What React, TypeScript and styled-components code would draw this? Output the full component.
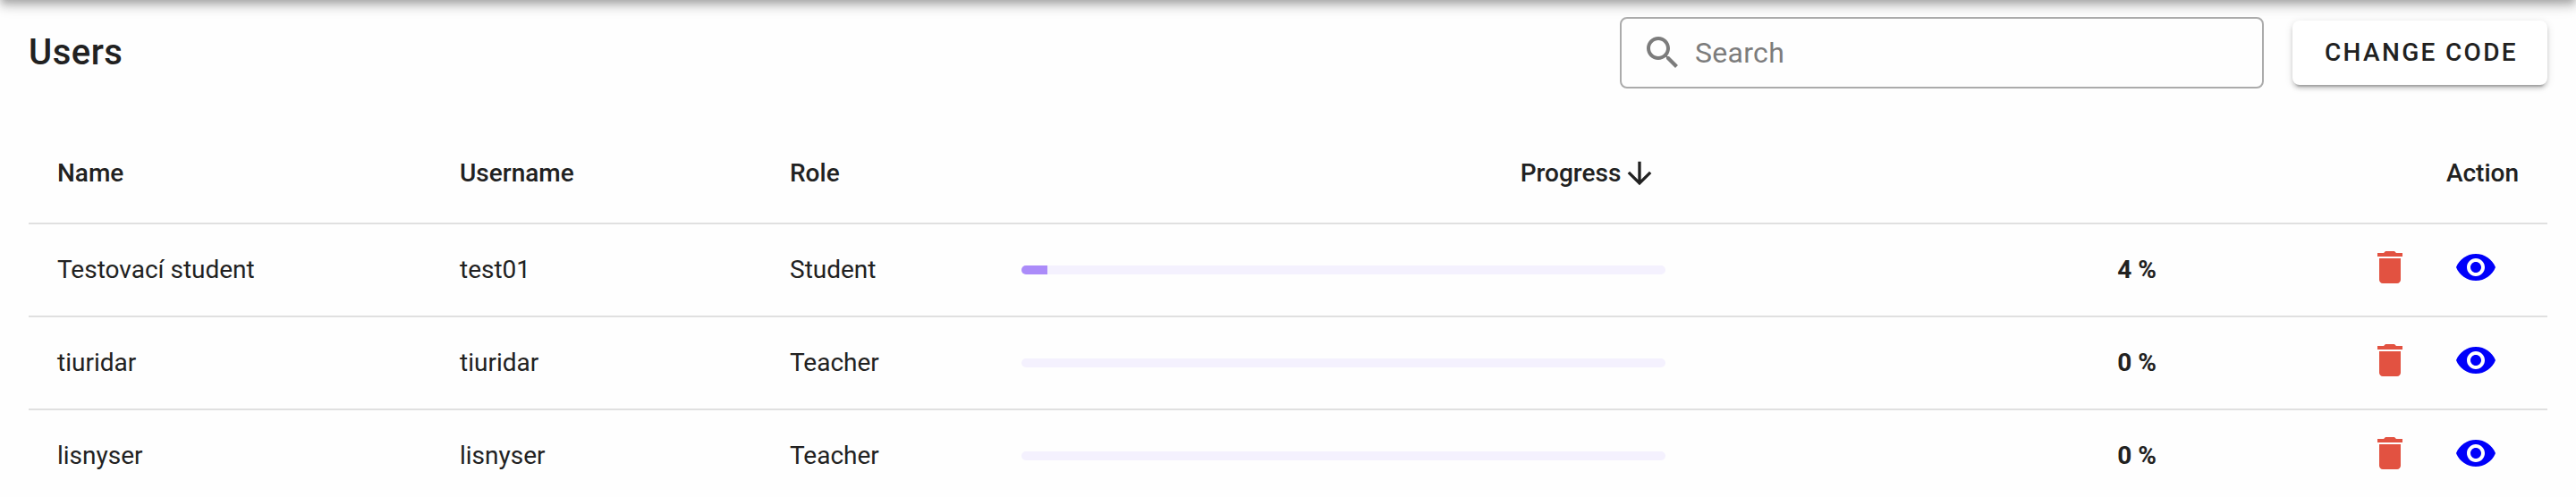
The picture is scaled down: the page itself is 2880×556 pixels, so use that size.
import React from "react";
import styled, { createGlobalStyle } from "styled-components";

const GlobalStyle = createGlobalStyle`
  *, *::before, *::after { box-sizing: border-box; }
  html, body { margin: 0; padding: 0; }
  body {
    background: #fefefe;
    color: #212121;
    font-family: Roboto, "Liberation Sans", sans-serif;
    font-size: 28px;
    -webkit-font-smoothing: antialiased;
  }
`;

const Page = styled.div`
  height: 556px;
  overflow: hidden;
  display: flex;
  flex-direction: column;
`;

const AppBar = styled.header`
  flex: none;
  height: 128px;
  margin-top: -128px;
  box-shadow:
    0 4px 8px -2px rgba(0, 0, 0, 0.2),
    0 8px 10px 0 rgba(0, 0, 0, 0.14),
    0 2px 20px 0 rgba(0, 0, 0, 0.12);
`;

const Toolbar = styled.div`
  flex: none;
  display: flex;
  align-items: center;
  gap: 32px;
  height: 118px;
  padding: 0 32px;
`;

const Title = styled.h1`
  flex: 1;
  margin: 0;
  font-size: 40px;
  line-height: 64px;
  font-weight: 500;
  letter-spacing: 0.5px;
`;

const SearchField = styled.label`
  display: flex;
  align-items: center;
  gap: 12px;
  width: 720px;
  height: 80px;
  padding: 0 22px;
  border: 2px solid #ababab;
  border-radius: 8px;
  color: #7c7c7c;
`;

const SearchInput = styled.input`
  flex: 1;
  min-width: 0;
  padding: 0;
  border: 0;
  outline: 0;
  background: transparent;
  font: 400 32px/56px Roboto, "Liberation Sans", sans-serif;
  letter-spacing: 0.3px;
  color: #212121;
  &::placeholder { color: #7c7c7c; opacity: 1; }
`;

const RaisedButton = styled.button`
  width: 285px;
  height: 72px;
  padding: 0 0 0 3px;
  border: 0;
  border-radius: 8px;
  background: #fff;
  color: #212121;
  font: 500 28px/72px Roboto, "Liberation Sans", sans-serif;
  letter-spacing: 2.33px;
  text-transform: uppercase;
  white-space: nowrap;
  box-shadow:
    0 6px 2px -4px rgba(0, 0, 0, 0.2),
    0 4px 4px 0 rgba(0, 0, 0, 0.14),
    0 2px 10px 0 rgba(0, 0, 0, 0.12);
`;

const Table = styled.div`
  flex: none;
  margin: 21px 32px 0;
`;

const Row = styled.div<{ $head?: boolean }>`
  display: grid;
  grid-template-columns: 450px 369px 259px 1333px 1fr;
  height: ${(p) => (p.$head ? 112 : 104)}px;
  border-bottom: 2px solid #e0e0e0;
  font-weight: ${(p) => (p.$head ? 500 : 400)};
`;

const Cell = styled.div<{ $align?: "center" | "flex-end" | "space-between" }>`
  display: flex;
  align-items: center;
  justify-content: ${(p) => p.$align ?? "flex-start"};
  padding: 0 32px;
  line-height: 40px;
  white-space: nowrap;
`;

const ActionCell = styled(Cell)`
  padding-bottom: 6px;
`;

const Track = styled.div`
  width: 720px;
  height: 10px;
  border-radius: 5px;
  background: #f4f1fe;
  overflow: hidden;
`;

const Fill = styled.div`
  height: 100%;
  background: #ab8bf9;
`;

const Percent = styled.span`
  font-weight: 700;
`;

const IconButton = styled.button<{ $color: string }>`
  display: flex;
  align-items: center;
  justify-content: center;
  width: 96px;
  height: 96px;
  padding: 0;
  border: 0;
  background: none;
  color: ${(p) => p.$color};
`;

const Glyph = styled.svg<{ $size: number }>`
  flex: none;
  width: ${(p) => p.$size}px;
  height: ${(p) => p.$size}px;
  fill: currentColor;
`;

const SortGlyph = styled(Glyph)`
  margin-left: 1px;
`;

const paths = {
  search:
    "M15.5 14h-.79l-.28-.27C15.41 12.59 16 11.11 16 9.5 16 5.91 13.09 3 9.5 3S3 5.91 3 9.5 5.91 16 9.5 16c1.61 0 3.09-.59 4.23-1.57l.27.28v.79l5 4.99L20.49 19l-4.99-5zm-6 0C7.01 14 5 11.99 5 9.5S7.01 5 9.5 5 14 7.01 14 9.5 11.99 14 9.5 14z",
  down: "M20 12l-1.41-1.41L13 16.17V4h-2v12.17l-5.58-5.59L4 12l8 8 8-8z",
  trash:
    "M6 19c0 1.1.9 2 2 2h8c1.1 0 2-.9 2-2V7H6v12zM19 4h-3.5l-1-1h-5l-1 1H5v2h14V4z",
  eye: "M12 4.5C7 4.5 2.73 7.61 1 12c1.73 4.39 6 7.5 11 7.5s9.27-3.11 11-7.5c-1.73-4.39-6-7.5-11-7.5zM12 17c-2.76 0-5-2.24-5-5s2.24-5 5-5 5 2.24 5 5-2.24 5-5 5zm0-8c-1.66 0-3 1.34-3 3s1.34 3 3 3 3-1.34 3-3-1.34-3-3-3z",
};

const users = [
  { name: "Testovací student", username: "test01", role: "Student", progress: 4 },
  { name: "tiuridar", username: "tiuridar", role: "Teacher", progress: 0 },
  { name: "lisnyser", username: "lisnyser", role: "Teacher", progress: 0 },
];

export default function App() {
  return (
    <Page>
      <GlobalStyle />
      <AppBar />
      <Toolbar>
        <Title>Users</Title>
        <SearchField>
          <Glyph $size={48} viewBox="0 0 24 24">
            <path d={paths.search} />
          </Glyph>
          <SearchInput placeholder="Search" />
        </SearchField>
        <RaisedButton>Change code</RaisedButton>
      </Toolbar>
      <Table>
        <Row $head>
          <Cell>Name</Cell>
          <Cell>Username</Cell>
          <Cell>Role</Cell>
          <Cell $align="center">
            Progress
            <SortGlyph $size={40} viewBox="0 0 24 24">
              <path d={paths.down} />
            </SortGlyph>
          </Cell>
          <Cell $align="flex-end">Action</Cell>
        </Row>
        {users.map((u) => (
          <Row key={u.name}>
            <Cell>{u.name}</Cell>
            <Cell>{u.username}</Cell>
            <Cell>{u.role}</Cell>
            <Cell $align="space-between">
              <Track>
                <Fill style={{ width: `${u.progress}%` }} />
              </Track>
              <Percent>{u.progress} %</Percent>
            </Cell>
            <ActionCell $align="flex-end">
              <IconButton $color="#e25241" aria-label="Delete">
                <Glyph $size={48} viewBox="0 0 24 24">
                  <path d={paths.trash} />
                </Glyph>
              </IconButton>
              <IconButton $color="#0000fa" aria-label="View">
                <Glyph $size={48} viewBox="0 0 24 24">
                  <path d={paths.eye} />
                </Glyph>
              </IconButton>
            </ActionCell>
          </Row>
        ))}
      </Table>
    </Page>
  );
}
